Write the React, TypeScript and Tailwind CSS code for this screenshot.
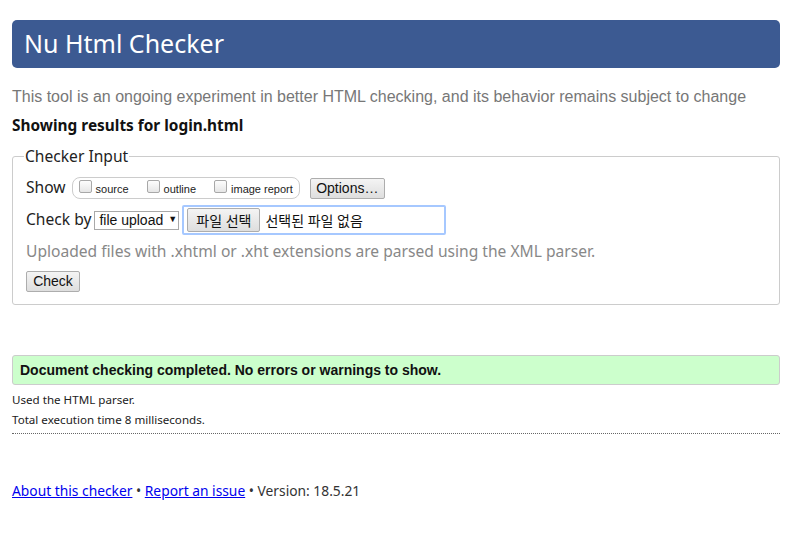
const sans = "font-['Noto_Sans','Noto_Sans_CJK_KR',sans-serif]";
const arial = "font-['Liberation_Sans','Noto_Sans_CJK_KR',sans-serif]";

const Box = ({ label }: { label: string }) => (
  <label className="flex items-center mr-[18px] last:mr-[4px]">
    <span className="w-[13px] h-[13px] border border-[#a8a8a8] rounded-[2px] bg-gradient-to-b from-[#fdfdfd] to-[#e6e6e6] mr-[4px] -mt-[3px]" />
    <span className={`${arial} text-[11px] text-[#222] mt-[2px]`}>{label}</span>
  </label>
);

const btn =
  "border border-[#adadad] bg-gradient-to-b from-[#f4f4f4] to-[#dedede] rounded-[2px] text-[#111] flex items-center justify-center";

export default function App() {
  return (
    <div className="w-[798px] min-h-[550px] bg-white pl-[12px] pr-[18px] pt-[20px] text-black">
      <h1
        className={`${sans} h-[48px] bg-[#3c5a92] rounded-[5px] text-white text-[25px] pl-[12px] flex items-center`}
      >
        Nu Html Checker
      </h1>

      <p className={`${arial} text-[16px] text-[#777] mt-[18px] leading-[22px]`}>
        This tool is an ongoing experiment in better HTML checking, and its behavior remains subject to change
      </p>

      <h2 className={`${sans} text-[15.4px] font-bold text-[#111] mt-[8px] leading-[20px]`}>
        Showing results for login.html
      </h2>

      <fieldset className="mt-[10px] border border-[#ccc] rounded-[3px] px-[13px] pb-[12px]">
        <legend className={`${sans} text-[15.6px] text-[#222] px-[1px] -ml-[2px] leading-[20px]`}>
          Checker Input
        </legend>

        <div className="flex items-center h-[24px] mt-[10px]">
          <span className={`${sans} text-[15.6px] text-[#222] mr-[6px]`}>Show</span>
          <div className="flex items-center h-[22px] border border-[#ccc] rounded-[8px] pl-[6px] pr-[2px]">
            <Box label="source" />
            <Box label="outline" />
            <Box label="image report" />
          </div>
          <button className={`${btn} ${arial} ml-[10px] w-[75px] h-[21px] text-[14px]`}>Options…</button>
        </div>

        <div className="flex items-center h-[30px] mt-[5px]">
          <span className={`${sans} text-[15.6px] text-[#222] mr-[3px]`}>Check by</span>
          <div
            className={`${arial} text-[14px] text-[#111] w-[85px] h-[19px] border border-[#a9a9a9] flex items-center pl-[4px] gap-[5px] whitespace-nowrap`}
          >
            file upload <span className="text-[9px]">▼</span>
          </div>
          <div className="ml-[3px] w-[264px] h-[30px] border-[2px] border-[#a6c8ff] rounded-[2px] flex items-center pl-[3px]">
            <button className={`${btn} ${sans} w-[73px] h-[24px] text-[14px]`}>파일 선택</button>
            <span className={`${sans} text-[14px] text-[#111] ml-[5px]`}>선택된 파일 없음</span>
          </div>
        </div>

        <p className={`${sans} text-[15.6px] text-[#888] mt-[5px] leading-[22px]`}>
          Uploaded files with .xhtml or .xht extensions are parsed using the XML parser.
        </p>

        <button className={`${btn} ${arial} mt-[9px] w-[54px] h-[21px] text-[14px]`}>Check</button>
      </fieldset>

      <div
        className={`${arial} mt-[50px] h-[30px] bg-[#ccffcc] border border-[#ccc] rounded-[3px] flex items-center pl-[7px] text-[14px] font-bold text-[#111]`}
      >
        Document checking completed. No errors or warnings to show.
      </div>

      <div className={`${sans} text-[11.6px] text-[#222] pt-[5px] pb-[3px] border-b border-dotted border-[#666] leading-[20px]`}>
        <p>Used the HTML parser.</p>
        <p>Total execution time 8 milliseconds.</p>
      </div>

      <p className={`${sans} text-[13.8px] text-[#333] mt-[47px]`}>
        <a href="#" className="text-[#00e] underline">About this checker</a> •{" "}
        <a href="#" className="text-[#00e] underline">Report an issue</a> • Version: 18.5.21
      </p>
    </div>
  );
}
